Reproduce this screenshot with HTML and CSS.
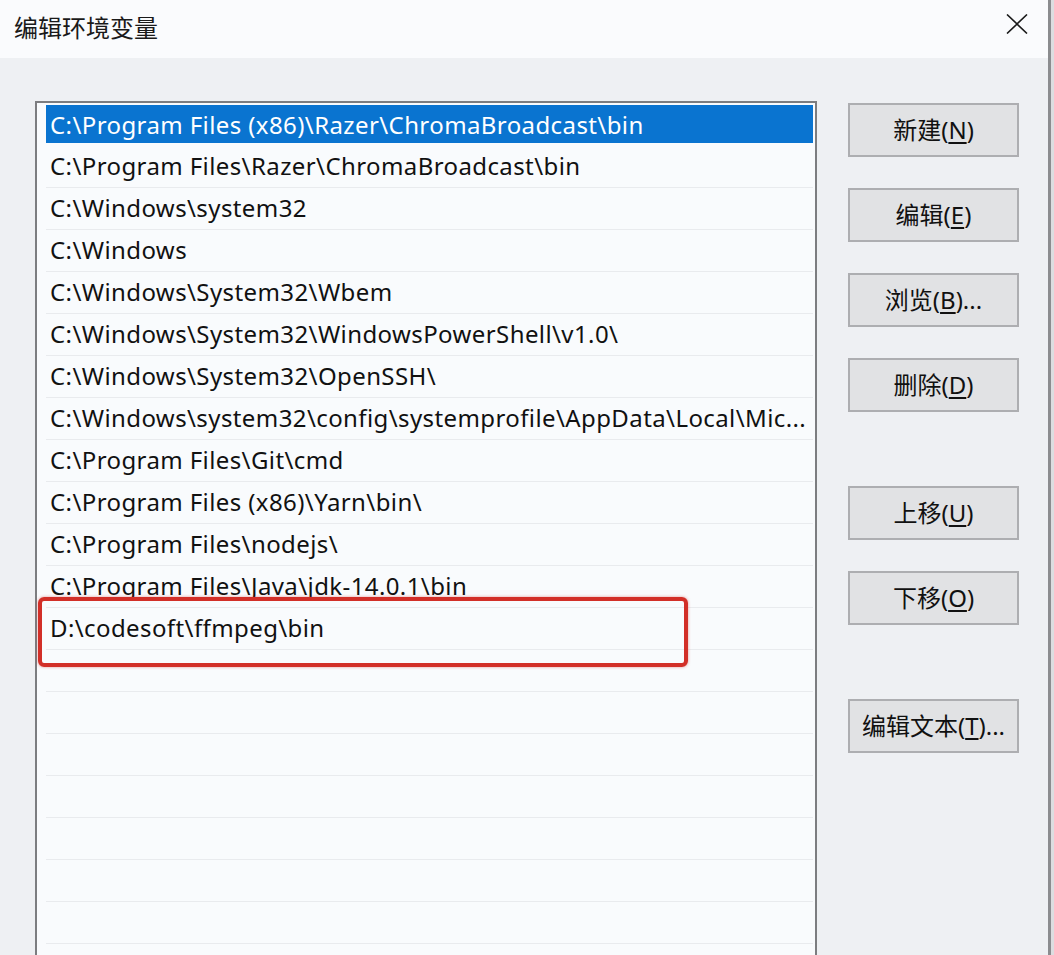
FILE: index.html
```html
<!DOCTYPE html>
<html lang="zh-CN">
  <head>
    <meta charset="utf-8" />
    <title>编辑环境变量</title>
    <link rel="stylesheet" href="styles.css">
  </head>
  <body>
    <div class="window">
      <div class="title-bar">
        <span class="title">编辑环境变量</span>
        <button class="close-btn" aria-label="关闭">
          <svg width="22" height="20" viewBox="0 0 22 20">
            <path d="M1 0.5 L21 19.5 M21 0.5 L1 19.5" stroke="#1a1a1a" stroke-width="1.6" fill="none" />
          </svg>
        </button>
      </div>
      <div class="content">
        <div class="path-list">
          <div class="row selected">C:\Program Files (x86)\Razer\ChromaBroadcast\bin</div>
          <div class="row">C:\Program Files\Razer\ChromaBroadcast\bin</div>
          <div class="row">C:\Windows\system32</div>
          <div class="row">C:\Windows</div>
          <div class="row">C:\Windows\System32\Wbem</div>
          <div class="row">C:\Windows\System32\WindowsPowerShell\v1.0\</div>
          <div class="row">C:\Windows\System32\OpenSSH\</div>
          <div class="row">C:\Windows\system32\config\systemprofile\AppData\Local\Mic...</div>
          <div class="row">C:\Program Files\Git\cmd</div>
          <div class="row">C:\Program Files (x86)\Yarn\bin\</div>
          <div class="row">C:\Program Files\nodejs\</div>
          <div class="row">C:\Program Files\Java\jdk-14.0.1\bin</div>
          <div class="row highlighted">D:\codesoft\ffmpeg\bin<span class="red-mark"></span></div>
          <div class="row"></div>
          <div class="row"></div>
          <div class="row"></div>
          <div class="row"></div>
          <div class="row"></div>
          <div class="row"></div>
          <div class="row"></div>
        </div>
        <div class="btn-column">
          <div class="btn-group">
            <button class="btn">新建(<u>N</u>)</button>
            <button class="btn">编辑(<u>E</u>)</button>
            <button class="btn">浏览(<u>B</u>)...</button>
            <button class="btn">删除(<u>D</u>)</button>
          </div>
          <div class="btn-group">
            <button class="btn">上移(<u>U</u>)</button>
            <button class="btn">下移(<u>O</u>)</button>
          </div>
          <div class="btn-group">
            <button class="btn">编辑文本(<u>T</u>)...</button>
          </div>
        </div>
      </div>
    </div>
  </body>
</html>
```

FILE: styles.css
```css
html {
  height: 100%;
}

body {
  margin: 0;
  width: 1054px;
  height: 955px;
  overflow: hidden;
  background-color: #dcdde0;
  font-family: "Noto Sans", "Noto Sans CJK SC", sans-serif;
  color: #111111;
}

.window {
  width: 1048px;
  height: 955px;
  border-right: 3px solid #8b8c8f;
  background-color: #eef0f3;
  overflow: hidden;
}

.title-bar {
  height: 58px;
  display: flex;
  align-items: center;
  justify-content: space-between;
  padding: 0 20px 0 14px;
  background-color: #fafbfd;
}

.title {
  font-size: 24px;
  color: #1a1a1a;
  margin-top: -6px;
}

.close-btn {
  border: none;
  background: none;
  padding: 0;
  margin-top: -10px;
  display: flex;
}

.content {
  display: flex;
  align-items: flex-start;
  padding: 43px 0 0 35px;
  gap: 31px;
}

.path-list {
  box-sizing: border-box;
  width: 782px;
  height: 900px;
  flex-shrink: 0;
  border: 2px solid #7c7d80;
  background-color: #f9fbfd;
  padding: 2px 2px 0 9px;
}

.row {
  position: relative;
  height: 41px;
  line-height: 40px;
  padding-left: 4px;
  font-size: 24px;
  letter-spacing: 0.4px;
  white-space: nowrap;
  border-bottom: 1px solid #e9ebee;
}

.row.selected {
  background-color: #0a74d0;
  color: #ffffff;
  height: 38px;
  margin-bottom: 3px;
  border-bottom: none;
}

.red-mark {
  position: absolute;
  left: -8px;
  top: -11px;
  width: 642px;
  height: 62px;
  border: 4px solid #d22f28;
  border-radius: 6px;
  box-shadow: 0 0 3px rgba(210, 47, 40, 0.5);
}

.btn-column {
  display: flex;
  flex-direction: column;
  gap: 74px;
  padding-top: 2px;
}

.btn-group {
  display: flex;
  flex-direction: column;
  gap: 31px;
}

.btn {
  width: 171px;
  height: 54px;
  border: 2px solid #adaeb1;
  background-color: #e1e2e4;
  font-family: "Noto Sans", "Noto Sans CJK SC", sans-serif;
  font-size: 24px;
  color: #111111;
  padding: 0 0 4px;
}

.btn u {
  text-underline-offset: 3px;
}
```
